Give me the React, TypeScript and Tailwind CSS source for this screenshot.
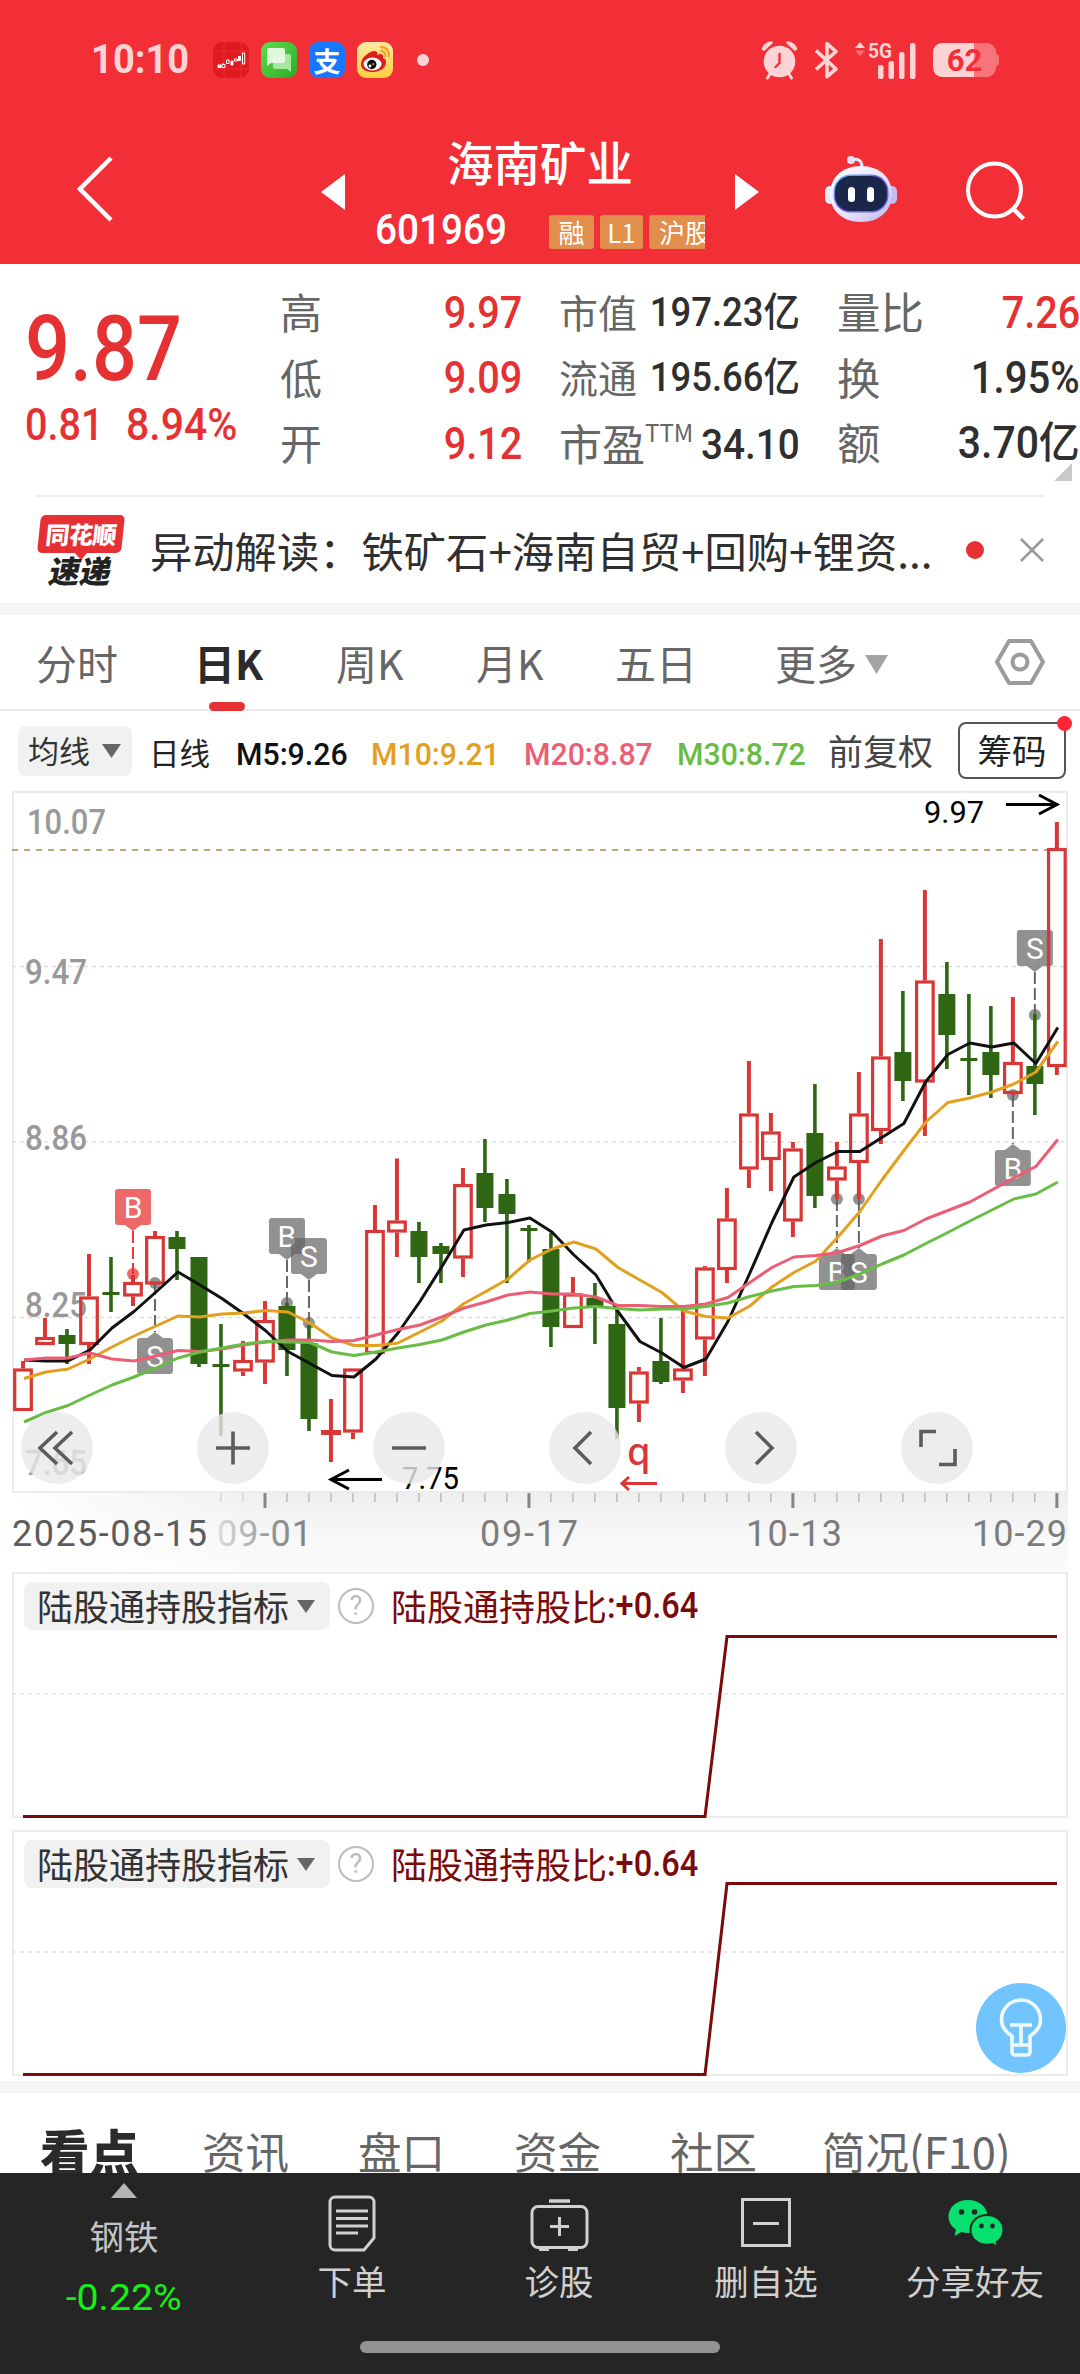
import { useState } from "react";
import type { ReactNode } from "react";
import clsx from "clsx";

type Side = "up" | "down" | "flat";

interface Candle {
  side: Side;
  high: number;
  top: number;
  bottom: number;
  low: number;
}

const u = (high: number, top: number, bottom: number, low: number): Candle => ({
  side: "up",
  high,
  top,
  bottom,
  low,
});
const d = (high: number, top: number, bottom: number, low: number): Candle => ({
  side: "down",
  high,
  top,
  bottom,
  low,
});

const STEP = 21.997;
const X0 = 23;
const cx = (i: number) => X0 + STEP * i;

const candles: Candle[] = [
  u(1361, 1368.5, 1411, 1411),
  u(1318, 1337, 1345, 1345),
  d(1329, 1335, 1344, 1364),
  u(1254, 1296.5, 1345, 1364),
  d(1257, 1292, 1295, 1312),
  u(1275, 1282, 1296.5, 1306),
  u(1231, 1236, 1284.5, 1284),
  d(1231, 1237, 1249, 1280),
  d(1257, 1257, 1364, 1367),
  d(1324, 1364, 1367, 1436),
  u(1341, 1360, 1371.5, 1376),
  u(1301, 1320, 1362.5, 1384),
  d(1303, 1306, 1350, 1376),
  d(1325, 1343, 1419, 1431),
  { side: "flat", high: 1399, top: 1430, bottom: 1435, low: 1462 },
  u(1369, 1368.5, 1432.5, 1439),
  u(1205, 1230, 1354, 1354),
  u(1158.5, 1220.5, 1232.5, 1257),
  d(1222, 1231, 1257, 1283),
  d(1243, 1246, 1254, 1283),
  u(1168, 1184, 1258.5, 1277),
  d(1139, 1173, 1208, 1222),
  d(1179, 1194, 1214, 1283),
  d(1225, 1228, 1231, 1262),
  d(1233, 1249, 1327, 1347),
  u(1277, 1293.5, 1328, 1328),
  d(1283, 1298, 1308, 1344),
  d(1310, 1324, 1408, 1439),
  u(1367, 1371.5, 1403.5, 1422),
  d(1318, 1361, 1382, 1384),
  u(1310, 1368.5, 1380.5, 1393),
  u(1266, 1267.5, 1339.5, 1376),
  u(1188, 1218.5, 1270, 1283),
  u(1061, 1113.5, 1169.5, 1188),
  u(1113, 1131.5, 1160, 1191),
  u(1142, 1148.5, 1221.5, 1237),
  d(1084, 1133, 1196, 1208),
  u(1142, 1166.5, 1180.5, 1199),
  u(1072, 1113.5, 1163, 1199),
  u(939, 1056.5, 1131, 1144),
  d(991, 1052, 1081, 1101),
  u(890, 980.5, 1082.5, 1136),
  d(962, 994, 1035, 1069),
  d(994, 1058, 1061, 1095),
  d(1006, 1052, 1075, 1098),
  u(997, 1062, 1094, 1095),
  d(1014, 1066, 1084, 1115),
  u(822, 848, 1067, 1075),
];

const averages = [
  {
    name: "M5",
    color: "#111111",
    points: [
      1360, 1361, 1361, 1350, 1328, 1311.5, 1292, 1272, 1285, 1298.5, 1314, 1331,
      1351.5, 1363.5, 1375.5, 1377, 1359, 1333, 1301.5, 1266.5, 1230, 1225,
      1222.5, 1218, 1232, 1255, 1275, 1311.5, 1341.5, 1353, 1367.5, 1359, 1321.5,
      1273, 1222.5, 1177, 1162.5, 1151.5, 1151.5, 1137.5, 1123.5, 1081.5, 1054.5,
      1043, 1047, 1043, 1063.5, 1027.5,
    ],
  },
  {
    name: "M10",
    color: "#e3a01f",
    points: [
      1378.5, 1372, 1369, 1359, 1347, 1336, 1326, 1316, 1317, 1314, 1313, 1310.5,
      1312, 1323, 1338, 1345.5, 1345.5, 1343, 1332, 1321, 1303.5, 1291.5, 1279,
      1260, 1249, 1242, 1249, 1267.5, 1280, 1292.5, 1311, 1316.5, 1318, 1306,
      1287, 1272.5, 1261, 1237, 1211.5, 1180, 1150.5, 1122, 1102.5, 1098, 1092,
      1084, 1072, 1041.5,
    ],
  },
  {
    name: "M20",
    color: "#eb5e76",
    points: [
      1360, 1358, 1358, 1353, 1359, 1361, 1356, 1350.5, 1351.5, 1349, 1345, 1342,
      1340, 1340, 1341.5, 1340.5, 1335, 1329.5, 1325, 1317, 1308, 1302, 1295,
      1292, 1294, 1294, 1297, 1305.5, 1305.5, 1306.5, 1306.5, 1304, 1297.5,
      1282.5, 1267.5, 1257, 1255.5, 1252.5, 1245.5, 1236, 1230.5, 1219, 1210.5,
      1202, 1190, 1178, 1166.5, 1139.5,
    ],
  },
  {
    name: "M30",
    color: "#69bd45",
    points: [
      1422, 1412.5, 1405.5, 1395, 1385, 1377, 1368, 1358, 1352, 1348, 1344,
      1341.5, 1342, 1342.5, 1352, 1355.5, 1352, 1348, 1344.5, 1340, 1332, 1325,
      1320, 1313.5, 1311, 1308, 1306.5, 1308.5, 1310, 1309, 1309, 1306.5, 1303,
      1296.5, 1291, 1286.5, 1285.5, 1282, 1274, 1264, 1255, 1243.5, 1232.5, 1221,
      1210, 1199, 1194, 1182,
    ],
  },
];

const GRAY = "#616161";
const RED = "#e62727";

// index of the candle, box top, dot position
const markers = [
  { i: 5, label: "B", box: 1189, dot: 1274, color: RED },
  { i: 6, label: "S", box: 1338, dot: 1283, color: GRAY },
  { i: 12, label: "B", box: 1218, dot: 1303, color: GRAY },
  { i: 13, label: "S", box: 1238, dot: 1323, color: GRAY },
  { i: 37, label: "B", box: 1254, dot: 1199, color: GRAY },
  { i: 38, label: "S", box: 1254, dot: 1199, color: GRAY },
  { i: 45, label: "B", box: 1150, dot: 1095, color: GRAY },
  { i: 46, label: "S", box: 930, dot: 1015, color: GRAY },
];

const priceLabels = [
  { text: "10.07", x: 27, y: 834, w: 79 },
  { text: "9.47", x: 25, y: 984, w: 62 },
  { text: "8.86", x: 25, y: 1150, w: 62 },
  { text: "8.25", x: 25, y: 1317, w: 62 },
  { text: "7.65", x: 25, y: 1475, w: 62 },
];

const dateLabels = [
  { text: "2025-08-15", x: 12, w: 195, fill: "#5c5c5c" },
  { text: "09-01", x: 217, w: 95, fill: "url(#fadeText)" },
  { text: "09-17", x: 480, w: 98, fill: "#7c7c7c" },
  { text: "10-13", x: 746, w: 96, fill: "#7c7c7c" },
  { text: "10-29", x: 972, w: 95, fill: "#7c7c7c" },
];

const Condensed = ({
  children,
  className,
}: {
  children: ReactNode;
  className?: string;
}) => (
  <span
    className={clsx(
      "inline-block whitespace-nowrap font-[Roboto,'Noto_Sans_CJK_SC',sans-serif]",
      className,
    )}
  >
    {children}
  </span>
);

const StatusBar = () => (
  <div className="flex h-[122px] items-center pb-0.5 pl-[91px]">
    <div className="flex w-[122px]">
      <Condensed className="origin-left scale-x-[.93] text-[41px] font-bold text-[#fdd3d5]">
        10:10
      </Condensed>
    </div>
    <div className="flex gap-3">
      <svg width="36" height="36" viewBox="0 0 36 36">
        <rect width="36" height="36" rx="9" fill="#e01b20" />
        <path
          d="M11 0V36M28 0V36M0 9H36M0 27H36"
          stroke="#ee3a3e"
          strokeWidth=".6"
        />
        <g fill="#fff" stroke="#fff" strokeWidth="1">
          <path d="M5 23h3v2.500h-3zM18 19h2v4h-2zM25.500 14.500h2v4h-2z" />
          <path
            d="M10 22.500v-1.500M9 22.500h3v3h-3zM13.500 18h2.500v3.500h-2.500zM21.500 17h3v2h-3zM29.500 11h2.200v11h-2.200z"
            fill="none"
          />
        </g>
      </svg>
      <svg width="36" height="36" viewBox="0 0 36 36">
        <defs>
          <linearGradient id="msg" x1="0" y1="0" x2="1" y2="1">
            <stop stopColor="#5fdc50" />
            <stop offset="1" stopColor="#2dab27" />
          </linearGradient>
        </defs>
        <rect width="36" height="36" rx="9" fill="url(#msg)" />
        <path
          d="M14 12h14a2 2 0 0 1 2 2v16l-4-3H14a2 2 0 0 1-2-2V14a2 2 0 0 1 2-2z"
          fill="#a5e79d"
        />
        <path
          d="M8 6h14a2 2 0 0 1 2 2v11a2 2 0 0 1-2 2H10l-4 3V8a2 2 0 0 1 2-2z"
          fill="#e9fae6"
          opacity=".93"
        />
      </svg>
      <div className="flex size-9 items-center justify-center rounded-[9px] bg-[#1677ff] font-['Noto_Sans_CJK_SC',sans-serif] text-[27px] leading-none font-bold text-white">
        支
      </div>
      <svg width="36" height="36" viewBox="0 0 36 36">
        <defs>
          <linearGradient id="wb" x1="0" y1="0" x2="0" y2="1">
            <stop stopColor="#ffe9a8" />
            <stop offset="1" stopColor="#ffcd3c" />
          </linearGradient>
        </defs>
        <rect width="36" height="36" rx="9" fill="url(#wb)" />
        <path
          d="M4 22C4 16 11 10 17 9c3-.5 4 2 3 4 4-2 7-1 6 3 3 1 4 4 2 8-2 4-8 6-13 6C9 30 4 27 4 22z"
          fill="#d81e1e"
        />
        <ellipse cx="15.500" cy="22" rx="9" ry="6.500" fill="#fff" />
        <circle cx="14.800" cy="22.500" r="4.700" fill="#111" />
        <circle cx="13" cy="24" r="1.400" fill="#fff" />
        <circle cx="16.200" cy="22" r=".8" fill="#fff" />
        <path
          d="M24 5c5 0 8.500 4 8 9M24 9c3 0 4.500 2.500 4 5"
          fill="none"
          stroke="#f6a623"
          strokeWidth="2.300"
          strokeLinecap="round"
        />
      </svg>
    </div>
    <span className="ml-6 size-3 rounded-full bg-[#fdd3d5]" />

    <svg
      className="ml-[332px]"
      width="37"
      height="40"
      viewBox="0 0 37 40"
      fill="#fdd3d5"
      stroke="#fdd3d5"
      strokeLinecap="round"
    >
      <circle cx="18.500" cy="21.500" r="15.800" stroke="none" />
      <path d="M9 34l-2.500 4M28 34l2.500 4" strokeWidth="3" />
      <path
        d="M2 9C3 5.500 6.500 2.500 10.500 2.500L3 9.500zM35 9C34 5.500 30.500 2.500 26.500 2.500L34 9.500z"
        strokeWidth="2.500"
        strokeLinejoin="round"
      />
      <path
        d="M18.500 14v9l-4 4"
        fill="none"
        stroke="#f22f37"
        strokeWidth="2.400"
      />
    </svg>
    <svg
      className="ml-[17px]"
      width="23"
      height="38"
      viewBox="0 0 23 38"
      fill="none"
      stroke="#fdd3d5"
      strokeWidth="3.600"
      strokeLinejoin="round"
    >
      <path d="M1 9.500L21 28 12 35.500V2.500L21 10.500 1 28.500" />
    </svg>
    <svg className="ml-4" width="64" height="40" viewBox="0 0 64 40">
      <path d="M1 8L6 2l5 6z" fill="#fdd3d5" />
      <path d="M1 10.500L6 16l5-5.500z" fill="#f7757a" />
      <text
        x="14"
        y="17.500"
        fontSize="21"
        fontWeight="700"
        fill="#fdd3d5"
        textLength="24"
        lengthAdjust="spacingAndGlyphs"
        className="font-[Roboto,sans-serif]"
      >
        5G
      </text>
      <g fill="#fdd3d5">
        <rect x="24" y="25" width="5.500" height="14" rx="2" />
        <rect x="34.500" y="21" width="5.500" height="18" rx="2" />
        <rect x="45" y="12" width="5.500" height="27" rx="2" />
        <rect x="56" y="3" width="5.500" height="36" rx="2" />
      </g>
    </svg>
    <div className="ml-[15px] flex items-center">
      <div className="flex h-[34px] w-[63px] items-center justify-center rounded-[9px] bg-linear-to-r from-[#fdd3d5] from-65% to-[#f7757a] to-65%">
        <span className="font-[Roboto,sans-serif] text-[31px] leading-none font-bold text-[#f22f37]">
          62
        </span>
      </div>
      <span className="h-3 w-[3px] rounded-r bg-[#f7757a]" />
    </div>
  </div>
);

const NavBar = () => (
  <div className="flex h-[142px] items-center pb-2 pl-[77px]">
    <svg width="36" height="66" viewBox="0 0 36 66" fill="none">
      <path d="M34 2L3 33 34 64" stroke="#fff" strokeWidth="4.500" />
    </svg>
    <svg className="mt-1.5 ml-[208px]" width="24" height="36">
      <path d="M0 18L24 0V36z" fill="#fff" />
    </svg>
    <div className="w-[390px] self-start">
      <h1 className="h-20 text-center text-[46.5px] leading-[77px] font-medium text-white">
        海南矿业
      </h1>
      <div className="flex h-[54px] items-center pr-[30px] pl-[30px]">
        <div className="flex w-[174px]">
          <Condensed className="origin-left scale-x-[.9] text-[43px] leading-[54px] font-medium text-white">
            601969
          </Condensed>
        </div>
        <div className="-my-2.5 flex w-[156px] shrink-0 gap-1.5 overflow-x-clip pt-1.5 text-[26px] leading-[34px] whitespace-nowrap text-white">
          <span className="h-[34px] w-[45px] shrink-0 rounded-[3px] bg-[#e28e4c] text-center">
            融
          </span>
          <span className="h-[34px] w-[43px] shrink-0 rounded-[3px] bg-[#e28e4c] text-center">
            L1
          </span>
          <span className="h-[34px] w-[72px] shrink-0 rounded-[3px] bg-[#e28e4c] pl-2.5">
            沪股
          </span>
        </div>
      </div>
    </div>
    <svg className="mt-1.5" width="24" height="36">
      <path d="M24 18L0 0V36z" fill="#fff" />
    </svg>
    <svg className="ml-[66px]" width="72" height="68" viewBox="0 0 72 68">
      <defs>
        <linearGradient id="head" x1="0" y1="0" x2="1" y2="1">
          <stop stopColor="#ffffff" />
          <stop offset=".6" stopColor="#e4e2fb" />
          <stop offset="1" stopColor="#b9b3e8" />
        </linearGradient>
        <linearGradient id="rim" x1="0" y1="0" x2="1" y2="1">
          <stop stopColor="#6fd6f5" />
          <stop offset=".5" stopColor="#7c4df0" />
          <stop offset="1" stopColor="#5b6bf5" />
        </linearGradient>
      </defs>
      <path
        d="M26 5c6-2 11 0 11 7"
        fill="none"
        stroke="#e8e6fb"
        strokeWidth="3"
      />
      <circle cx="26" cy="5" r="4" fill="#e4e2fb" />
      <rect y="31" width="10" height="18" rx="5" fill="#e9e8fc" />
      <rect x="62" y="31" width="10" height="18" rx="5" fill="#c3bdf0" />
      <path
        d="M36 11C55 11 67 23 67 39S55 67 36 67 5 55 5 39 17 11 36 11z"
        fill="url(#head)"
      />
      <rect x="8.500" y="19.500" width="55" height="38" rx="17" fill="url(#rim)" />
      <rect x="10" y="21" width="52" height="35" rx="15.500" fill="#1b2748" />
      <rect x="23" y="32" width="7" height="15" rx="3.500" fill="#fff" />
      <rect x="42" y="32" width="7" height="15" rx="3.500" fill="#fff" />
    </svg>
    <svg
      className="mt-1 ml-[68px]"
      width="60"
      height="60"
      viewBox="0 0 60 60"
      fill="none"
      stroke="#fff"
      strokeWidth="4"
    >
      <circle cx="29.500" cy="29" r="26.500" />
      <path d="M48.500 48L58.500 58" strokeWidth="4.500" />
    </svg>
  </div>
);

const StatRow = ({ children }: { children: ReactNode }) => (
  <div className="flex h-[65.5px] items-center justify-between whitespace-nowrap">
    {children}
  </div>
);

const Label = ({ children }: { children: ReactNode }) => (
  <span className="-mt-1 text-[#666]">{children}</span>
);

const RedValue = ({ children }: { children: ReactNode }) => (
  <Condensed className="origin-right scale-x-[.88] text-[45px] leading-[60px] font-medium text-[#e53131]">
    {children}
  </Condensed>
);

const DarkValue = ({
  children,
  className,
}: {
  children: ReactNode;
  className?: string;
}) => (
  <Condensed
    className={clsx(
      "origin-right leading-[60px] font-medium text-[#2f2f2f]",
      className,
    )}
  >
    {children}
  </Condensed>
);

const Quote = () => (
  <section className="relative flex h-[231px] pt-4">
    <div className="w-[280px] pl-[25px]">
      <div className="flex h-[107px] pt-4">
        <Condensed className="origin-left scale-x-[.87] text-[91px] leading-[107px] font-medium text-[#e53131]">
          9.87
        </Condensed>
      </div>
      <div className="flex pt-2 text-[45px] leading-[60px] text-[#e53131]">
        <div className="flex w-[101px]">
          <Condensed className="origin-left scale-x-[.88] font-medium">
            0.81
          </Condensed>
        </div>
        <Condensed className="origin-left scale-x-[.91] font-medium">
          8.94%
        </Condensed>
      </div>
    </div>
    <div className="w-[242px] text-[42px]">
      <StatRow>
        <Label>高</Label>
        <RedValue>9.97</RedValue>
      </StatRow>
      <StatRow>
        <Label>低</Label>
        <RedValue>9.09</RedValue>
      </StatRow>
      <StatRow>
        <Label>开</Label>
        <RedValue>9.12</RedValue>
      </StatRow>
    </div>
    <div className="ml-[37px] w-[241px] text-[39px]">
      <StatRow>
        <Label>市值</Label>
        <DarkValue className="-ml-10 scale-x-[.91] text-[40px]">
          197.23亿
        </DarkValue>
      </StatRow>
      <StatRow>
        <Label>流通</Label>
        <DarkValue className="-ml-10 scale-x-[.91] text-[40px]">
          195.66亿
        </DarkValue>
      </StatRow>
      <StatRow>
        <span className="-mt-1 flex text-[43px] text-[#666]">
          市盈
          <span className="mt-[9px] text-[24px] leading-[26px]">TTM</span>
        </span>
        <DarkValue className="-ml-10 scale-x-[.9] text-[43px]">34.10</DarkValue>
      </StatRow>
    </div>
    <div className="ml-[37px] w-[243px] text-[43.5px]">
      <StatRow>
        <Label>量比</Label>
        <RedValue>7.26</RedValue>
      </StatRow>
      <StatRow>
        <Label>换</Label>
        <DarkValue className="scale-x-[.91] text-[44px]">1.95%</DarkValue>
      </StatRow>
      <StatRow>
        <Label>额</Label>
        <DarkValue className="scale-x-[.94] text-[43.5px]">3.70亿</DarkValue>
      </StatRow>
    </div>
    <svg className="absolute right-2 bottom-3.5" width="18" height="18">
      <path d="M18 0V18H0z" fill="#c9c9c9" />
    </svg>
  </section>
);

const NewsBar = () => (
  <section className="mx-9 flex h-[108px] items-center border-t-2 border-[#eee]">
    <div className="flex w-[90px] flex-col items-center">
      <div className="h-[38px] w-[84px] -skew-x-6 rounded-[5px] bg-[#e73034] text-center text-[24px] leading-[37px] font-black tracking-tight text-white">
        同花顺
      </div>
      <svg className="-mt-px" width="14" height="8">
        <path d="M0 0H14L7 8z" fill="#e73034" />
      </svg>
      <div className="-mt-1.5 -skew-x-12 text-[31px] leading-[31px] font-black text-[#222]">
        速递
      </div>
    </div>
    <p className="ml-6 w-[786px] text-[42.3px] leading-[60px] whitespace-nowrap text-[#2f2f2f]">
      异动解读：铁矿石+海南自贸+回购+锂资...
    </p>
    <span className="ml-[30px] size-[18px] shrink-0 rounded-full bg-[#e73034]" />
    <svg
      className="ml-[36px] shrink-0"
      width="24"
      height="24"
      stroke="#999"
      strokeWidth="2.500"
    >
      <path d="M1 1L23 23M23 1L1 23" />
    </svg>
  </section>
);

const periods = [
  { key: "分时", width: "w-[158px]" },
  { key: "日K", width: "w-[142px]" },
  { key: "周K", width: "w-[140px]" },
  { key: "月K", width: "w-[139px]" },
  { key: "五日", width: "w-[160px]" },
  { key: "更多", width: "w-[220px]" },
];

const PeriodTabs = () => {
  const [active, setActive] = useState("日K");
  return (
    <nav className="flex h-24 items-center border-b-2 border-[#eaeaea] pl-9 text-[41px] text-[#666]">
      {periods.map((p) => (
        <button
          key={p.key}
          onClick={() => setActive(p.key)}
          className={clsx(
            "relative flex h-full items-center pt-0.5 text-left whitespace-nowrap",
            p.width,
            active === p.key && "font-bold text-[#2b2b2b]",
          )}
        >
          {p.key}
          {p.key === "更多" && (
            <svg className="mt-0.5 ml-2" width="23" height="19">
              <path d="M0 0H23L11.500 19z" fill="#a3a3a3" />
            </svg>
          )}
          {active === p.key && (
            <span className="absolute -bottom-0.5 left-[15px] h-[9px] w-9 rounded-full bg-[#e73034]" />
          )}
        </button>
      ))}
      <svg
        width="50"
        height="48"
        viewBox="0 0 50 48"
        fill="none"
        stroke="#9b9b9b"
        strokeWidth="4"
        strokeLinejoin="round"
      >
        <path d="M14 3H36L48 24 36 45H14L2 24z" />
        <circle cx="25" cy="24" r="7.500" />
      </svg>
    </nav>
  );
};

const legend = [
  { text: "M5:9.26", className: "w-[135px] text-[#111]" },
  { text: "M10:9.21", className: "w-[153px] text-[#e3a01f]" },
  { text: "M20:8.87", className: "w-[153px] text-[#eb5e76]" },
  { text: "M30:8.72", className: "w-[151px] text-[#69bd45]" },
];

const LegendRow = () => (
  <div className="flex h-[79px] items-center pl-[18px] whitespace-nowrap">
    <div className="flex h-[50px] w-[114px] items-center rounded-lg bg-[#f1f1f1] pl-2.5 text-[31px] text-[#333]">
      均线
      <svg className="ml-3" width="19" height="14">
        <path d="M0 0H19L9.500 14z" fill="#666" />
      </svg>
    </div>
    <span className="ml-[17px] w-[87px] pt-1 text-[30.5px] text-[#222]">
      日线
    </span>
    {legend.map((l) => (
      <div
        key={l.text}
        className={clsx(
          "flex pt-1.5 text-[32px] leading-[50px] font-medium",
          l.className,
        )}
      >
        <Condensed className="origin-left scale-x-[.945]">{l.text}</Condensed>
      </div>
    ))}
    <span className="w-[130px] text-[35px] text-[#444]">前复权</span>
    <button className="relative h-[57px] w-[108px] rounded-lg border-2 border-[#555] pb-1 text-[34.5px] leading-[51px] text-[#222]">
      筹码
      <span className="absolute -top-2 -right-2 size-[15px] rounded-full bg-[#ff2438]" />
    </button>
  </div>
);

const Marker = ({ i, label, box, dot, color }: (typeof markers)[number]) => {
  const x = cx(i);
  const above = box < dot;
  return (
    <g>
      <line
        x1={x}
        x2={x}
        y1={above ? box + 42 : dot}
        y2={above ? dot : box - 6}
        stroke={color === GRAY ? "#666" : "#e03c3c"}
        strokeWidth="2"
        strokeDasharray="12 4"
      />
      <circle cx={x} cy={dot} r="6" fill={color} opacity=".69" />
      <g opacity=".69">
        <rect x={x - 18} y={box} width="36" height="36" rx="3" fill={color} />
        <path
          d={
            above
              ? `M${x - 8} ${box + 36}h16l-8 6z`
              : `M${x - 8} ${box}h16l-8 -6z`
          }
          fill={color}
        />
      </g>
      <text
        x={x}
        y={box + 29}
        fontSize="30"
        textAnchor="middle"
        fill="#fff"
        className="font-[Roboto,sans-serif]"
      >
        {label}
      </text>
    </g>
  );
};

const CandleShape = ({ candle, i }: { candle: Candle; i: number }) => {
  const x = cx(i);
  const { side, high, top, bottom, low } = candle;
  if (side === "down") {
    return (
      <g fill="#2f6613">
        <rect x={x - 1.8} y={high} width="3.600" height={low - high} />
        <rect x={x - 8.5} y={top} width="17" height={bottom - top} />
      </g>
    );
  }
  return (
    <g fill="#d93636">
      {high < top && <rect x={x - 2} y={high} width="4" height={top - high} />}
      {low > bottom && (
        <rect x={x - 2} y={bottom} width="4" height={low - bottom} />
      )}
      {side === "flat" ? (
        <rect x={x - 10} y={top} width="20" height={bottom - top} />
      ) : (
        <rect
          x={x - 8.3}
          y={top + 1.5}
          width="16.600"
          height={bottom - top - 3}
          fill="none"
          stroke="#d93636"
          strokeWidth="3.200"
        />
      )}
    </g>
  );
};

const controls = [
  { x: 57, d: "M0 -16L-17 0L0 16M15 -16L-2 0L15 16" },
  { x: 233, d: "M-17 0H17M0 -16.500V16.500" },
  { x: 409, d: "M-17 0H17" },
  { x: 585, d: "M6 -16L-10 0L6 16" },
  { x: 761, d: "M-5 -16L11 0L-5 16" },
  { x: 937, d: "M-16 -1V-16.500H-1M18 1V16.500H2" },
];

const KLineChart = () => (
  <svg
    className="block"
    width="1080"
    height="782"
    viewBox="0 790 1080 782"
    fill="none"
  >
    <defs>
      <linearGradient id="fadeText" x1="0" x2="1" y1="0" y2="0">
        <stop stopColor="#dcdcdc" />
        <stop offset=".6" stopColor="#939393" />
        <stop offset="1" stopColor="#7f7f7f" />
      </linearGradient>
      <linearGradient id="axisBg" x1="0" x2="0" y1="0" y2="1">
        <stop stopColor="#efefef" />
        <stop offset=".6" stopColor="#f8f8f8" />
        <stop offset="1" stopColor="#fbfbfb" />
      </linearGradient>
      <linearGradient id="axisFade" x1="0" x2="1" y1="0" y2="0">
        <stop stopColor="#fff" />
        <stop offset="1" stopColor="#fff" stopOpacity="0" />
      </linearGradient>
    </defs>
    <rect x="13" y="1493" width="1055" height="79" fill="url(#axisBg)" />
    <rect x="12" y="1493" width="260" height="79" fill="url(#axisFade)" />
    <rect
      x="13"
      y="792"
      width="1054"
      height="700"
      stroke="#ececec"
      strokeWidth="2"
    />
    {[966.5, 1142, 1317.5].map((y) => (
      <line
        key={y}
        x1="12"
        x2="1067"
        y1={y}
        y2={y}
        stroke="#dedede"
        strokeWidth="1.300"
        strokeDasharray="4 4"
      />
    ))}
    <line
      x1="12"
      x2="1050"
      y1="850"
      y2="850"
      stroke="#b9a57a"
      strokeWidth="2"
      strokeDasharray="6 6"
    />

    {priceLabels.map((l) => (
      <text
        key={l.text}
        x={l.x}
        y={l.y}
        fontSize="35"
        fontWeight="500"
        fill="#999"
        textLength={l.w}
        lengthAdjust="spacingAndGlyphs"
        className="font-[Roboto,sans-serif]"
      >
        {l.text}
      </text>
    ))}

    {markers.map((m) => (
      <Marker key={m.i} {...m} />
    ))}
    {candles.map((c, i) => (
      <CandleShape key={i} candle={c} i={i} />
    ))}
    {averages.map((a) => (
      <polyline
        key={a.name}
        points={a.points.map((y, i) => `${cx(i) + 1},${y}`).join(" ")}
        stroke={a.color}
        strokeWidth="3"
        strokeLinejoin="round"
      />
    ))}

    {/* High / low callouts */}
    <g fontSize="31" fill="#000" className="font-[Roboto,sans-serif]">
      <text
        x="924"
        y="822.500"
        textLength="60"
        lengthAdjust="spacingAndGlyphs"
      >
        9.97
      </text>
      <text x="402" y="1489" textLength="57" lengthAdjust="spacingAndGlyphs">
        7.75
      </text>
    </g>
    <g stroke="#000" strokeWidth="3">
      <path d="M1006 804.500H1056M1039 795L1057 804.500 1039 814" />
      <path d="M382 1479.500H332M349 1470L331 1479.500 349 1489" />
    </g>
    <text
      x="627"
      y="1465"
      fontSize="38"
      fontWeight="500"
      fill="#d93636"
      className="font-['Noto_Sans',sans-serif]"
    >
      q
    </text>
    <path
      d="M657 1483.500H623M629 1477L622 1483.500 629 1490"
      stroke="#d93636"
      strokeWidth="3"
    />

    {controls.map((c) => (
      <g key={c.x} transform={`translate(${c.x} 1448)`}>
        <circle r="36" fill="#e9e9e9" opacity=".8" />
        <path d={c.d} stroke="#5c5c5c" strokeWidth="3.600" />
      </g>
    ))}

    {/* Time axis */}
    {candles.map((_, i) => {
      const major = i % 12 === 11;
      return i < 9 ? null : (
        <line
          key={i}
          x1={cx(i)}
          x2={cx(i)}
          y1="1493"
          y2={major ? 1508 : 1502}
          stroke={i < 11 ? "#c8c8c8" : major ? "#858585" : "#a0a0a0"}
          strokeWidth={major ? 3 : 1}
        />
      );
    })}
    {dateLabels.map((l) => (
      <text
        key={l.text}
        x={l.x}
        y="1546"
        fontSize="36"
        fill={l.fill}
        textLength={l.w}
        className="font-[Roboto,sans-serif]"
      >
        {l.text}
      </text>
    ))}
  </svg>
);

const IndicatorPanel = ({ high }: { high: number }) => (
  <div className="relative mx-3 h-[246px] border-2 border-[#ececec]">
    <svg
      className="absolute -top-0.5 -left-0.5 overflow-visible"
      width="1056"
      height="246"
      fill="none"
    >
      <line
        x1="0"
        x2="1056"
        y1="122"
        y2="122"
        stroke="#e9e9e9"
        strokeWidth="2"
        strokeDasharray="4 4"
      />
      <path
        d={`M11 244.500H693L715 ${high}H1045`}
        stroke="#7b0a0a"
        strokeWidth="3"
      />
    </svg>
    <div className="relative flex items-center pt-2 pl-2.5">
      <div className="flex h-12 w-[306px] items-center rounded-lg bg-[#f1f1f1] pb-0.5 pl-[13px] text-[36px] whitespace-nowrap text-[#333]">
        陆股通持股指标
        <svg className="mt-0.5 ml-2 shrink-0" width="18" height="13">
          <path d="M0 0H18L9 13z" fill="#666" />
        </svg>
      </div>
      <div className="ml-2 flex size-9 items-center justify-center rounded-full border-2 border-[#bcbcbc] font-[Roboto,sans-serif] text-[27px] text-[#bcbcbc]">
        ?
      </div>
      <div className="ml-[17px] flex text-[36px] leading-[48px] whitespace-nowrap text-[#7b0a0a]">
        <span className="-mt-px">陆股通持股比</span>
        <Condensed className="origin-left scale-x-[.88] text-[37px] font-medium">
          :+0.64
        </Condensed>
      </div>
    </div>
  </div>
);

const sections = [
  { name: "资讯", width: "w-[156px]" },
  { name: "盘口", width: "w-[156px]" },
  { name: "资金", width: "w-[156px]" },
  { name: "社区", width: "w-[152px]" },
  { name: "简况(F10)", width: "w-[250px]" },
];

const SectionTabs = () => (
  <nav className="flex h-20 items-start overflow-hidden pt-6 pl-10 text-[43.5px] leading-[68px] whitespace-nowrap text-[#666]">
    <span className="w-[162px] text-[49.5px] font-black text-[#2b2b2b]">
      看点
    </span>
    {sections.map((s) => (
      <span key={s.name} className={s.width}>
        {s.name}
      </span>
    ))}
  </nav>
);

const BottomItem = ({
  label,
  className,
  children,
}: {
  label: string;
  className: string;
  children: ReactNode;
}) => (
  <button className={clsx("flex flex-col items-center pt-[22px]", className)}>
    <svg width="60" height="58" viewBox="0 0 60 58" fill="none">
      {children}
    </svg>
    <span className="mt-0.5 text-[34.5px] leading-[50px] whitespace-nowrap text-[#d0d0d0]">
      {label}
    </span>
  </button>
);

const BottomBar = () => (
  <footer className="flex h-[201px] flex-col items-center bg-[#252525]">
    <div className="flex h-[168px] w-full">
      <div className="flex w-[248px] flex-col items-center pt-2.5">
        <svg width="26" height="15">
          <path d="M0 15L13 0 26 15z" fill="#b5b5b5" />
        </svg>
        <span className="mt-3 text-[34.5px] leading-[50px] text-[#c4c4c4]">
          钢铁
        </span>
        <Condensed className="mt-3.5 scale-x-[1.06] text-[37px] leading-[48px] text-[#15f015]">
          -0.22%
        </Condensed>
      </div>
      <BottomItem label="下单" className="w-[208px]">
        <path
          d="M13 2H47a5 5 0 0 1 5 5V43L42 55H13a5 5 0 0 1-5-5V7a5 5 0 0 1 5-5z"
          stroke="#d0d0d0"
          strokeWidth="3"
        />
        <path
          d="M14 16H46M14 23.500H46M14 31H46M14 38H36"
          stroke="#d0d0d0"
          strokeWidth="3"
        />
      </BottomItem>
      <BottomItem label="诊股" className="w-[206px]">
        <path d="M20 6H41" stroke="#d0d0d0" strokeWidth="3.500" />
        <rect
          x="3"
          y="11.500"
          width="55"
          height="41"
          rx="6"
          stroke="#d0d0d0"
          strokeWidth="3"
        />
        <path
          d="M30.500 22V41M21 31.500H40M10 54.500H20M39 54.500H49"
          stroke="#d0d0d0"
          strokeWidth="3"
        />
      </BottomItem>
      <BottomItem label="删自选" className="w-[208px]">
        <rect
          x="6.500"
          y="4.500"
          width="47"
          height="46"
          stroke="#d0d0d0"
          strokeWidth="3"
        />
        <path d="M17 28.500H43" stroke="#d0d0d0" strokeWidth="3" />
      </BottomItem>
      <BottomItem label="分享好友" className="w-[210px]">
        <g transform="translate(1.500 0)">
          <path
            d="M21.500 5C10.500 5 2 12 2 21.500c0 5.500 2.800 9.800 7.500 13L8 41l7-4c2 .6 4.200.9 6.500.9C32.500 37.900 41 31 41 21.500S32.500 5 21.500 5z"
            fill="#07e06e"
          />
          <path
            d="M40.500 20C31 20 24 26.500 24 35s7 14.800 16.500 14.800c2 0 3.900-.3 5.600-.8l5.400 3-1.300-5c4.400-2.700 6.800-7 6.800-12C57 26.500 50 20 40.500 20z"
            fill="#07e06e"
            stroke="#252525"
            strokeWidth="2"
          />
          <g fill="#252525">
            <circle cx="15" cy="17" r="2.800" />
            <circle cx="28" cy="17" r="2.800" />
            <circle cx="35" cy="31" r="2.400" />
            <circle cx="46" cy="31" r="2.400" />
          </g>
        </g>
      </BottomItem>
    </div>
    <span className="h-3 w-[360px] rounded-full bg-[#929292]" />
  </footer>
);

export default function App() {
  return (
    <div className="relative h-[2374px] w-[1080px] overflow-hidden bg-white font-['Noto_Sans_CJK_SC',sans-serif]">
      <header className="h-[264px] bg-[#f22f37]">
        <StatusBar />
        <NavBar />
      </header>
      <Quote />
      <NewsBar />
      <div className="h-3 bg-[#f4f4f4]" />
      <PeriodTabs />
      <LegendRow />
      <KLineChart />
      <IndicatorPanel high={64.5} />
      <div className="h-3" />
      <IndicatorPanel high={53.5} />
      <div className="mt-[5px] h-3 bg-[#f4f4f4]" />
      <SectionTabs />
      <BottomBar />

      {/* Floating hint button */}
      <button className="absolute top-[1983px] right-[14px] flex size-[90px] items-center justify-center rounded-full bg-[#72c4ff]">
        <svg
          width="44"
          height="60"
          viewBox="0 0 44 60"
          fill="none"
          stroke="#eefaff"
          strokeWidth="3.600"
          strokeLinejoin="round"
        >
          <path d="M13 38C5 33 2.500 27 2.500 21.500a19.500 19.500 0 0 1 39 0C41.500 27 39 33 31 38V54a3 3 0 0 1-3 3H16a3 3 0 0 1-3-3z" />
          <path d="M11 27H33M22 27V47M13 47H31" />
        </svg>
      </button>
    </div>
  );
}
